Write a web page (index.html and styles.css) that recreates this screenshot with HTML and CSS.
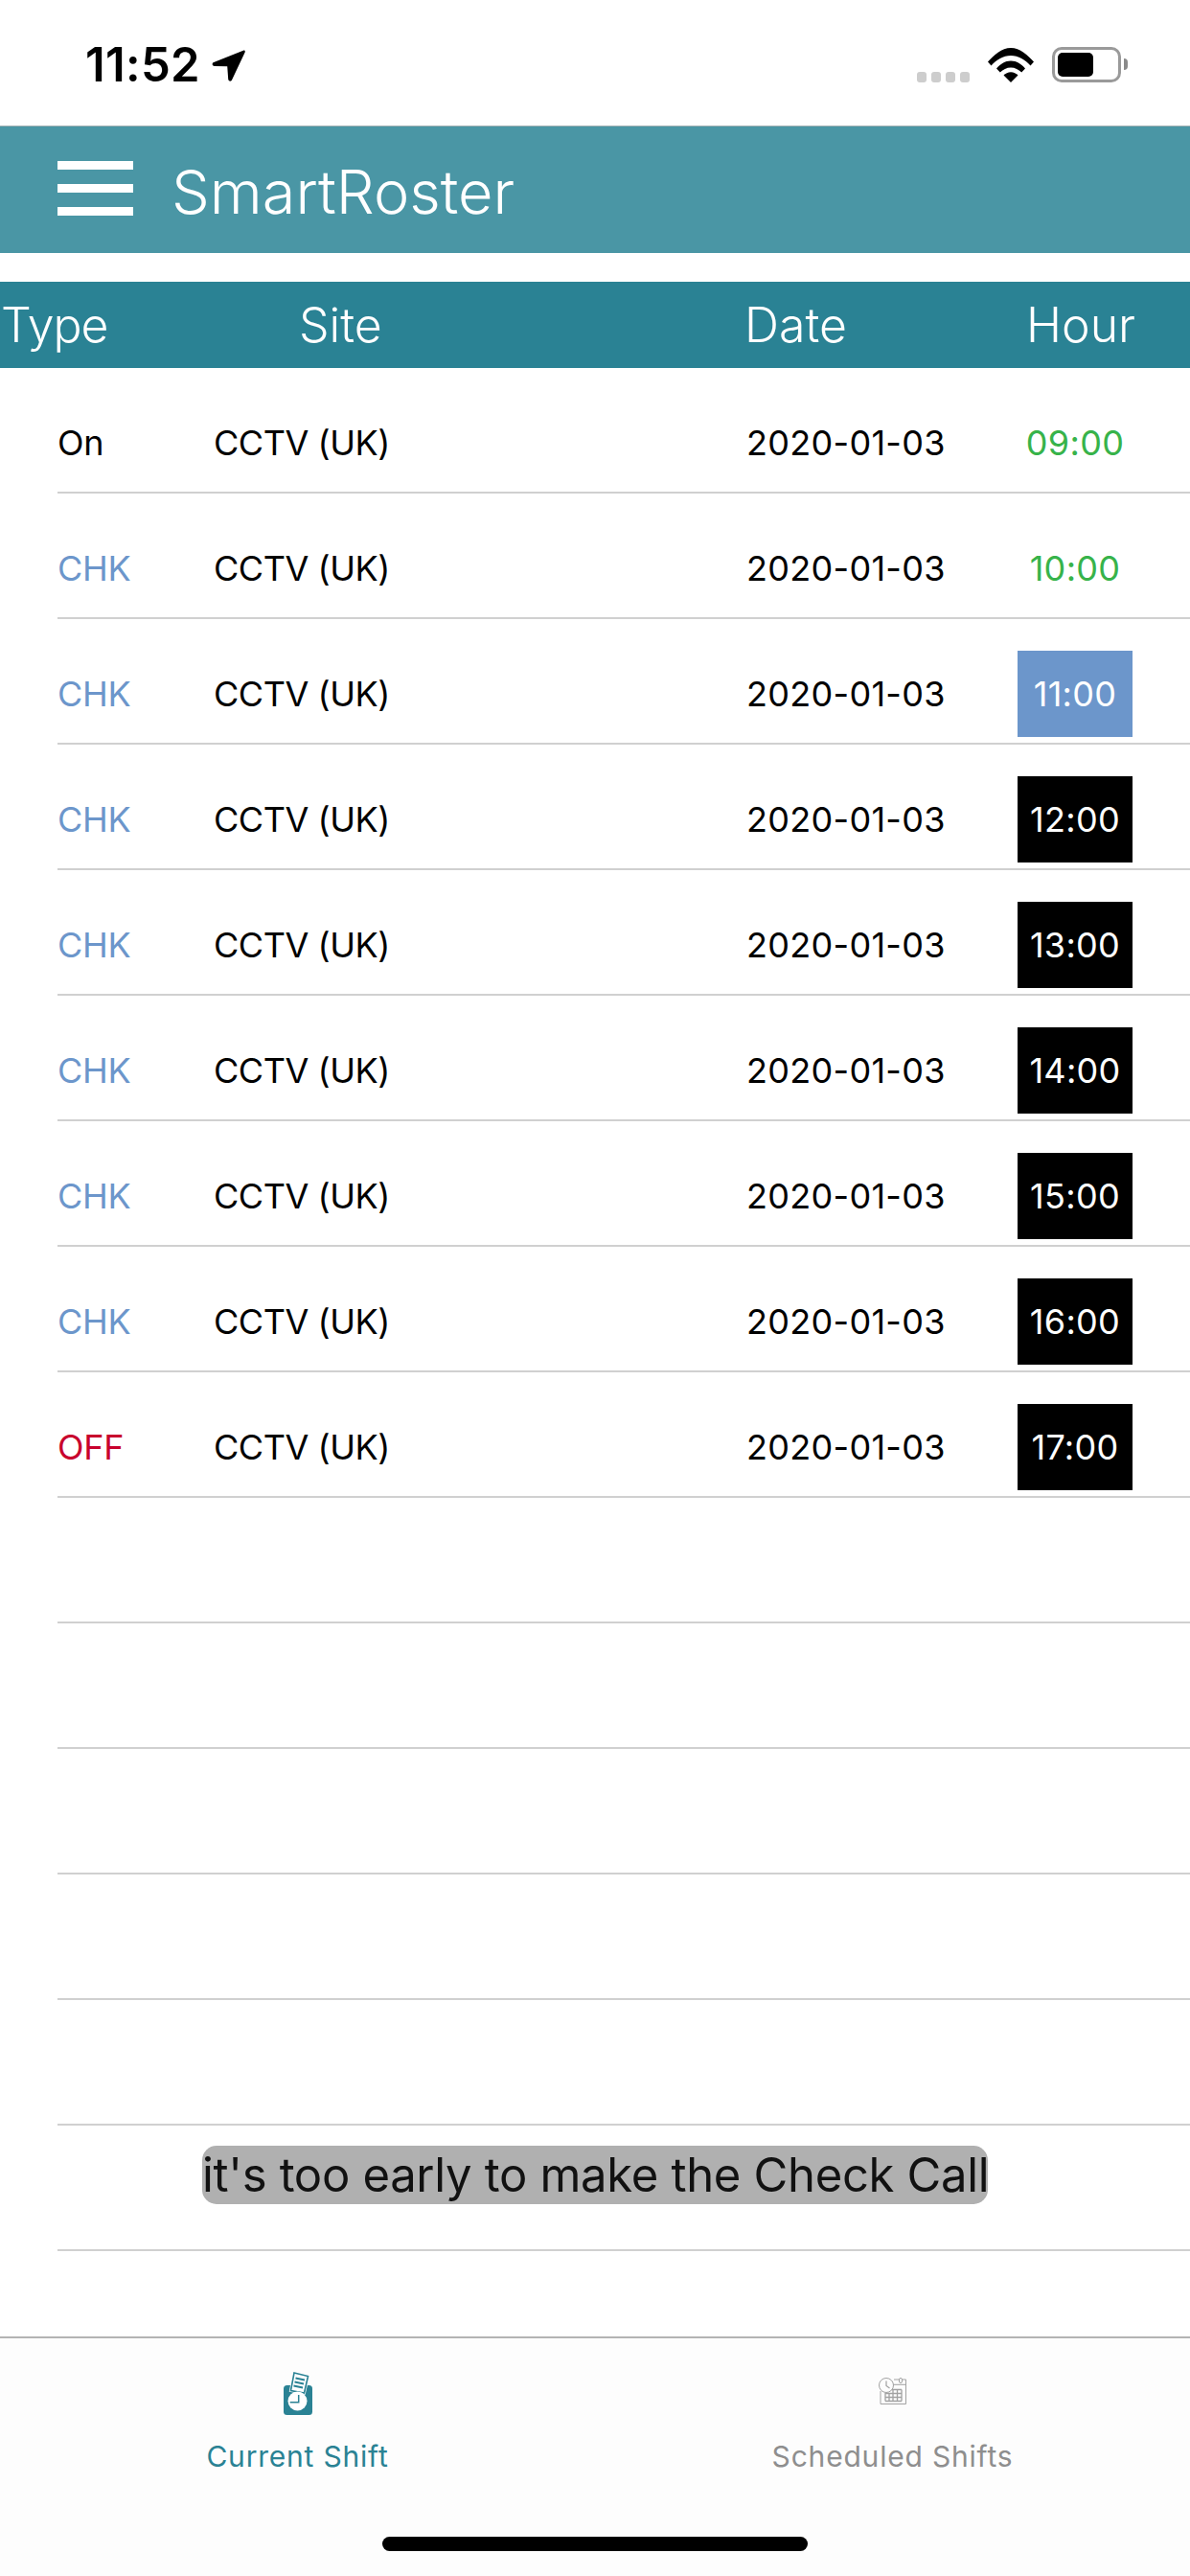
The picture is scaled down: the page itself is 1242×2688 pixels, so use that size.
FILE: index.html
```html
<!DOCTYPE html>
<html lang="en">
<head>
<meta charset="UTF-8" />
<meta name="viewport" content="width=device-width, initial-scale=1" />
<title>SmartRoster</title>
<link rel="stylesheet" href="styles.css">
</head>
<body>
  <div class="app">
    <div class="status-bar">
      <div class="status-left">
        <span class="clock">11:52</span>
        <svg class="loc-arrow" viewBox="0 0 33 31" width="35" height="33"><path d="M31 .6 2 12.200c-2.200.9-1.700 3.600.7 3.700l12.600.3.9 12.600c.2 2.300 3 2.700 3.700.6L32.700 2.300C33.100 1 32.200.1 31 .6z" fill="#000"/></svg>
      </div>
      <div class="status-right">
        <div class="signal"><i></i><i></i><i></i><i></i></div>
        <svg class="wifi" viewBox="0 0 48 36" width="48" height="36">
          <path d="M0 14.500C6 7.800 14.500 0 24 0s18 7.800 24 14.500l-3.500 4C39 12.500 32 8 24 8S9 12.500 3.500 18.500z" fill="#000"/>
          <path d="M9 21.500C13 17 18 13.500 24 13.500s11 3.500 15 8l-3.800 4C32 22.500 28.500 20.500 24 20.500s-8 2-11.200 5z" fill="#000"/>
          <path d="M16.500 28.500c2-2 4.500-3.300 7.500-3.300s5.500 1.300 7.500 3.300L24 36z" fill="#000"/>
        </svg>
        <div class="battery"><div class="battery-fill"></div></div>
      </div>
    </div>

    <header class="top-bar">
      <div class="burger"><i></i><i></i><i></i></div>
      <h1>SmartRoster</h1>
    </header>

    <div class="table-head">
      <span class="th-type">Type</span>
      <span class="th-site">Site</span>
      <span class="th-date">Date</span>
      <span class="th-hour">Hour</span>
    </div>

    <div class="rows">
      <div class="row"><span class="type">On</span><span class="site">CCTV (UK)</span><span class="date">2020-01-03</span><span class="hour past">09:00</span></div>
      <div class="row"><span class="type chk">CHK</span><span class="site">CCTV (UK)</span><span class="date">2020-01-03</span><span class="hour past">10:00</span></div>
      <div class="row"><span class="type chk">CHK</span><span class="site">CCTV (UK)</span><span class="date">2020-01-03</span><span class="hour now">11:00</span></div>
      <div class="row"><span class="type chk">CHK</span><span class="site">CCTV (UK)</span><span class="date">2020-01-03</span><span class="hour next">12:00</span></div>
      <div class="row"><span class="type chk">CHK</span><span class="site">CCTV (UK)</span><span class="date">2020-01-03</span><span class="hour next">13:00</span></div>
      <div class="row"><span class="type chk">CHK</span><span class="site">CCTV (UK)</span><span class="date">2020-01-03</span><span class="hour next">14:00</span></div>
      <div class="row"><span class="type chk">CHK</span><span class="site">CCTV (UK)</span><span class="date">2020-01-03</span><span class="hour next">15:00</span></div>
      <div class="row"><span class="type chk">CHK</span><span class="site">CCTV (UK)</span><span class="date">2020-01-03</span><span class="hour next">16:00</span></div>
      <div class="row"><span class="type off">OFF</span><span class="site">CCTV (UK)</span><span class="date">2020-01-03</span><span class="hour next">17:00</span></div>
      <div class="row"></div>
      <div class="row"></div>
      <div class="row"></div>
      <div class="row"></div>
      <div class="row"></div>
      <div class="row toast-row"><div class="toast">it's too early to make the Check Call</div></div>
    </div>

    <nav class="tabs">
      <div class="tab active">
        <div class="tab-icon">
          <svg viewBox="0 0 30 45" width="30" height="45">
            <rect x="0" y="14" width="30" height="31" rx="3.500" fill="#2a8294"/>
            <path d="M11 1 25.500 4.500 21.500 22 7.500 19.500z" fill="#fff" stroke="#fff" stroke-width="3"/>
            <path d="M11 1 25.500 4.500 21.500 22 7.500 19.500z" fill="#fff" stroke="#2a8294" stroke-width="1.600"/>
            <path d="M12.500 6.500 22 8.500M11.500 10.500 21 12.500M10.500 14.500 20 16.500" stroke="#2a8294" stroke-width="1.800"/>
            <circle cx="14.500" cy="30.500" r="10" fill="#fff"/>
            <path d="M15.700 24v7.700H6.700" fill="none" stroke="#2a8294" stroke-width="1.500"/>
          </svg>
        </div>
        <span class="tab-label">Current Shift</span>
      </div>
      <div class="tab">
        <div class="tab-icon icon-small">
          <svg viewBox="0 0 29 28" width="29" height="28" fill="none" stroke="#a2a2a2" stroke-width="1">
            <path d="M2 14v13.500h26.500V2H16"/>
            <path d="M15 7.300h13.500"/>
            <rect x="21.500" y=".5" width="3" height="5" rx="1.500" fill="#fdfdfd"/>
            <path d="M7 12.500h17M7 16.500h17M7 20.500h17M7 24.500h17M7 16v8.500M11 16v8.500M15 12.500v12M19.500 12.500v12M24 12.500v12" stroke-width="1.300"/>
            <circle cx="8" cy="8" r="7.500" fill="#fdfdfd"/>
            <path d="M8 3.500v5l3.500 2.500" stroke-width="1.200"/>
          </svg>
        </div>
        <span class="tab-label">Scheduled Shifts</span>
      </div>
      <div class="home-indicator"></div>
    </nav>
  </div>
</body>
</html>
```

FILE: styles.css
```css
/* Reset and base styles */
* {
  box-sizing: border-box;
}
body {
  margin: 0;
  background: #fff;
  color: #000;
  font-family: Inter, "Noto Sans", sans-serif;
}
.app {
  width: 1242px;
  height: 2688px;
  display: flex;
  flex-direction: column;
  overflow: hidden;
}

/* Status bar */
.status-bar {
  height: 131px;
  display: flex;
  justify-content: space-between;
  align-items: flex-start;
  padding: 41px 72px 0 89px;
}
.status-left {
  display: flex;
  align-items: center;
  gap: 12px;
}
.clock {
  font-size: 49px;
  font-weight: 600;
  line-height: 54px;
  letter-spacing: 0.3px;
}
.status-right {
  display: flex;
  align-items: flex-end;
  gap: 19px;
  padding-top: 8px;
}
.signal {
  display: flex;
  gap: 5px;
}
.signal i {
  width: 10px;
  height: 11px;
  border-radius: 3px;
  background: #cdcdcd;
}
.battery {
  position: relative;
  width: 72px;
  height: 37px;
  border: 3px solid #9a9a9a;
  border-radius: 10px;
  padding: 3px;
}
.battery::after {
  content: "";
  position: absolute;
  right: -10px;
  top: 9px;
  width: 4px;
  height: 12px;
  background: #8a8a8a;
  border-radius: 0 6px 6px 0;
}
.battery-fill {
  width: 37px;
  height: 25px;
  background: #000;
  border-radius: 5px;
}

/* Top bar */
.top-bar {
  height: 133px;
  flex: none;
  background: #4a96a5;
  border-top: 1px solid #9fb0b3;
  display: flex;
  align-items: center;
  gap: 40px;
  padding: 0 0 0 60px;
}
.burger {
  display: flex;
  flex-direction: column;
  gap: 15px;
  width: 79px;
  margin-bottom: 4px;
}
.burger i {
  display: block;
  height: 9px;
  background: #fff;
}
h1 {
  margin: 4px 0 0;
  color: #fff;
  font-size: 63px;
  font-weight: 300;
  line-height: 72px;
}

/* Table */
.table-head {
  height: 90px;
  flex: none;
  margin-top: 30px;
  background: #2a8294;
  color: #fff;
  font-size: 50px;
  font-weight: 300;
  line-height: 90px;
  display: grid;
  grid-template-columns: 312px 465px 294px 1fr;
}
.th-type {
  padding-left: 1px;
  letter-spacing: -1px;
}
.rows {
  flex: 1;
}
.row {
  height: 131px;
  margin-left: 60px;
  padding-top: 27px;
  border-bottom: 2px solid #d0d0d0;
  display: grid;
  grid-template-columns: 163px 556px 283px 120px;
  align-items: center;
  font-size: 36px;
  line-height: 44px;
}
.site {
  letter-spacing: -0.45px;
}
.date {
  letter-spacing: 0.3px;
}
.type {
  color: #000;
  letter-spacing: -0.3px;
}
.chk {
  color: #6c96cb;
}
.off {
  color: #c8002d;
}
.hour {
  height: 90px;
  display: flex;
  align-items: center;
  justify-content: center;
  letter-spacing: 0.3px;
}
.past {
  color: #37b34a;
}
.now {
  background: #6c96cb;
  color: #fff;
}
.next {
  background: #000;
  color: #fff;
}
.toast-row {
  display: flex;
  justify-content: center;
  align-items: flex-start;
  margin-left: 0;
  padding-top: 21px;
  border-bottom: 0;
  position: relative;
}
.toast-row::after {
  content: "";
  position: absolute;
  left: 60px;
  right: 0;
  bottom: 0;
  border-bottom: 2px solid #d0d0d0;
}
.toast {
  width: 820px;
  height: 61px;
  background: #b0b0b0;
  border-radius: 15px;
  color: #111;
  font-size: 49px;
  font-weight: 400;
  line-height: 61px;
  letter-spacing: -0.32px;
  white-space: nowrap;
}

/* Bottom tabs */
.tabs {
  position: relative;
  height: 250px;
  flex: none;
  background: #fdfdfd;
  border-top: 2px solid #b4b4b4;
  display: grid;
  grid-template-columns: 621px 621px;
}
.tab {
  display: flex;
  flex-direction: column;
  align-items: center;
  color: #8e8e8e;
}
.tab.active {
  color: #2a8294;
}
.tab-icon {
  height: 80px;
  padding-top: 33px;
  display: flex;
  align-items: flex-end;
}
.icon-small {
  align-items: flex-start;
  padding-top: 41px;
}
.tab-label {
  margin-top: 24px;
  font-size: 30px;
  line-height: 38px;
  letter-spacing: 0.8px;
}
.home-indicator {
  position: absolute;
  left: 399px;
  top: 207px;
  width: 444px;
  height: 15px;
  border-radius: 8px;
  background: #000;
}
```
